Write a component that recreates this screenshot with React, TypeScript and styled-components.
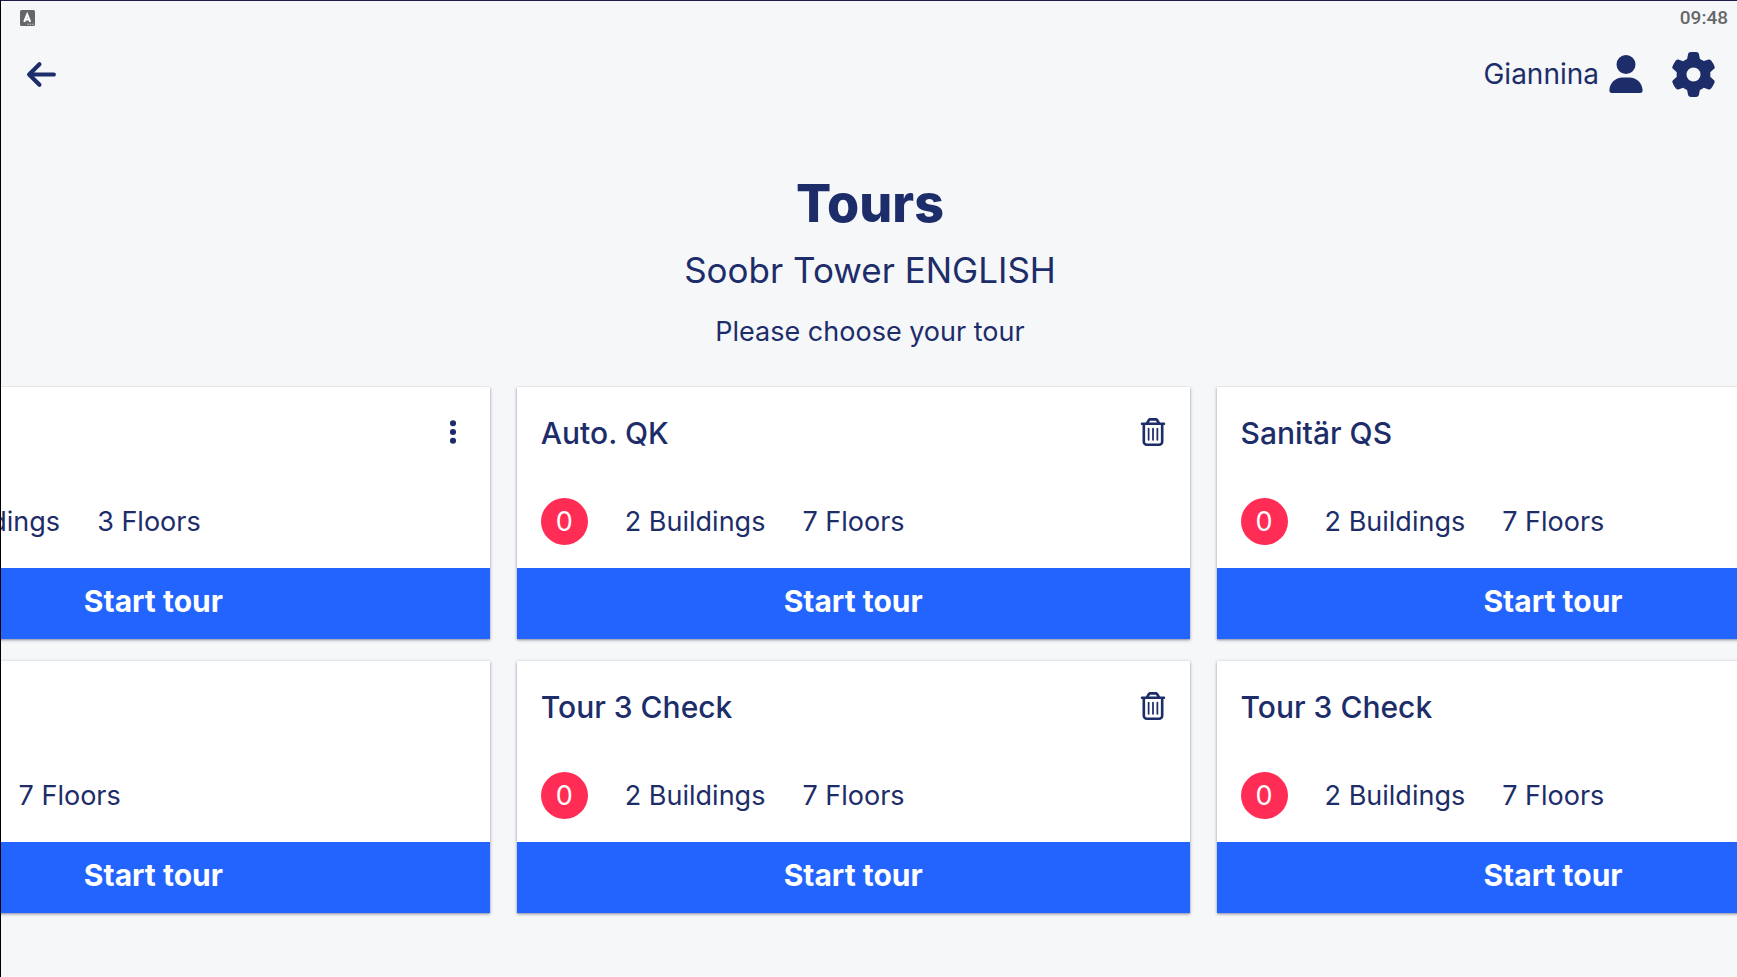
import React, { useLayoutEffect, useRef } from "react";
import styled, { createGlobalStyle } from "styled-components";
import { FaArrowLeft, FaEllipsisVertical, FaGear, FaRegTrashCan, FaUser } from "react-icons/fa6";

const NAVY = "#1d2d69";

const GlobalStyle = createGlobalStyle`
  * { box-sizing: border-box; }
  body {
    margin: 0;
    background: #f6f7f9;
    color: ${NAVY};
    font-family: Inter, sans-serif;
    font-optical-sizing: none;
  }
  h1, h2, h3, p { margin: 0; }
  button { font: inherit; color: inherit; border: 0; padding: 0; background: none; cursor: pointer; }
`;

const Screen = styled.div`
  min-height: 100vh;
  border-top: 1px solid #1e1b48;
  border-left: 1px solid #000;
  overflow: hidden;
`;

const StatusBar = styled.div`
  display: flex;
  align-items: center;
  justify-content: space-between;
  height: 34px;
  padding: 0 9px 0 19px;
  color: #666769;
  font: 500 19px/24px Roboto, sans-serif;
`;

const Header = styled.header`
  display: flex;
  align-items: center;
  justify-content: space-between;
  height: 78px;
  padding: 0 21px 0 24px;
`;

const IconButton = styled.button`
  display: flex;
  align-items: center;
`;

const HeaderActions = styled.div`
  display: flex;
  align-items: center;
  gap: 26px;
`;

const Account = styled(IconButton)`
  gap: 8px;
  font-size: 28px;
  line-height: 36px;
`;

const Hero = styled.section`
  display: flex;
  flex-direction: column;
  align-items: center;
  padding: 59px 24px 36px 26px;
  text-align: center;
`;

const Title = styled.h1`
  font-size: 52px;
  line-height: 64px;
  font-weight: 800;
`;

const Site = styled.h2`
  margin-top: 10px;
  font-size: 35px;
  line-height: 48px;
  font-weight: 400;
`;

const Hint = styled.p`
  margin-top: 20px;
  font-size: 27px;
  line-height: 36px;
`;

const Carousel = styled.main`
  display: grid;
  grid-template-rows: repeat(2, auto);
  grid-auto-flow: column;
  grid-auto-columns: 40%;
  gap: 22px 27px;
  padding: 1px 27px 32px;
  overflow-x: auto;
  scrollbar-width: none;
`;

const Card = styled.article`
  display: flex;
  flex-direction: column;
  background: #fff;
  box-shadow: 0 1px 3px rgba(29, 35, 60, 0.45), 0 1px 1px rgba(29, 35, 80, 0.1);
`;

const CardTop = styled.div`
  display: flex;
  align-items: flex-start;
  justify-content: space-between;
  height: 36px;
  margin: 28px 23px 0 24px;
`;

const CardAction = styled(IconButton)`
  height: 34px;
`;

const CardTitle = styled.h3`
  font-size: 30px;
  line-height: 36px;
  font-weight: 500;
`;

const Facts = styled.div`
  display: flex;
  align-items: center;
  gap: 37px;
  height: 48px;
  margin: 46px 24px 23px;
  font-size: 27px;
  line-height: 38px;
  white-space: nowrap;
`;

const Fact = styled.span`
  padding-top: 2px;
`;

const Badge = styled.span`
  display: flex;
  align-items: center;
  justify-content: center;
  width: 47px;
  height: 47px;
  padding-top: 2px;
  border-radius: 50%;
  background: #ff2d55;
  color: #fff;
`;

const StartButton = styled.button`
  height: 71px;
  padding-bottom: 6px;
  background: #2264fd;
  color: #fff;
  font-size: 30px;
  line-height: 36px;
  font-weight: 700;
`;

type Tour = {
  name: string;
  badge?: number;
  buildings: number;
  floors: number;
  action?: "menu" | "delete";
};

const tours: Tour[] = [
  { name: "", badge: 0, buildings: 1, floors: 3, action: "menu" },
  { name: "", buildings: 2, floors: 7 },
  { name: "Auto. QK", badge: 0, buildings: 2, floors: 7, action: "delete" },
  { name: "Tour 3 Check", badge: 0, buildings: 2, floors: 7, action: "delete" },
  { name: "Sanitär QS", badge: 0, buildings: 2, floors: 7, action: "delete" },
  { name: "Tour 3 Check", badge: 0, buildings: 2, floors: 7, action: "delete" },
];

function KeyboardIcon() {
  return (
    <svg width="15" height="16" viewBox="0 0 15 16" aria-hidden="true">
      <rect width="15" height="16" rx="1.5" fill="#666769" />
      <path d="M4.2 11.8 7.2 4.4 10.2 11.8M5.3 9.5H9.1" fill="none" stroke="#fff" strokeWidth="2" />
      <path d="M7.5 14.3h1.2M9.9 14.3h1.2M12.3 14.3h1.2" stroke="#ddd" strokeWidth="1.1" />
    </svg>
  );
}

function TourCard({ tour }: { tour: Tour }) {
  return (
    <Card>
      <CardTop>
        <CardTitle>{tour.name}</CardTitle>
        {tour.action === "delete" && (
          <CardAction aria-label="Delete tour"><FaRegTrashCan size={28} /></CardAction>
        )}
        {tour.action === "menu" && (
          <CardAction aria-label="Tour options"><FaEllipsisVertical size={28} /></CardAction>
        )}
      </CardTop>
      <Facts>
        {tour.badge !== undefined && <Badge>{tour.badge}</Badge>}
        <Fact>{tour.buildings} Buildings</Fact>
        <Fact>{tour.floors} Floors</Fact>
      </Facts>
      <StartButton>Start tour</StartButton>
    </Card>
  );
}

export default function App() {
  const carousel = useRef<HTMLElement>(null);

  useLayoutEffect(() => {
    if (carousel.current) carousel.current.scrollLeft = 211;
  }, []);

  return (
    <>
      <GlobalStyle />
      <Screen>
        <StatusBar>
          <KeyboardIcon />
          <time>09:48</time>
        </StatusBar>
        <Header>
          <IconButton aria-label="Back"><FaArrowLeft size={33} /></IconButton>
          <HeaderActions>
            <Account>Giannina <FaUser size={38} /></Account>
            <IconButton aria-label="Settings"><FaGear size={45} /></IconButton>
          </HeaderActions>
        </Header>
        <Hero>
          <Title>Tours</Title>
          <Site>Soobr Tower ENGLISH</Site>
          <Hint>Please choose your tour</Hint>
        </Hero>
        <Carousel ref={carousel}>
          {tours.map((tour, i) => <TourCard key={i} tour={tour} />)}
        </Carousel>
      </Screen>
    </>
  );
}
